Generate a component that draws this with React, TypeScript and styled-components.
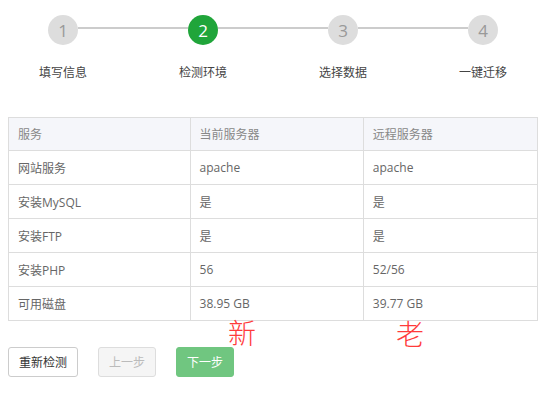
import React from 'react';
import styled, { createGlobalStyle } from 'styled-components';

const GlobalStyle = createGlobalStyle`
  body {
    margin: 0;
    background: #fff;
    font-family: "Open Sans", "Noto Sans CJK SC", sans-serif;
  }
`;

const Page = styled.div`
  position: relative;
  width: 550px;
  height: 397px;
  padding: 0 8px;
  box-sizing: border-box;
  overflow: hidden;
`;

const Steps = styled.ul`
  display: flex;
  list-style: none;
  margin: 15px 0 0 -15px;
  padding: 0;
`;

const Step = styled.li`
  position: relative;
  flex: 0 0 140px;
  display: flex;
  flex-direction: column;
  align-items: center;

  &:not(:first-child)::before {
    content: '';
    position: absolute;
    left: -55px;
    top: 12px;
    width: 110px;
    height: 2px;
    background: #ccc;
  }
`;

const Circle = styled.span<{ $active?: boolean }>`
  width: 30px;
  height: 30px;
  border-radius: 50%;
  display: flex;
  align-items: center;
  justify-content: center;
  font-size: 17px;
  background: ${p => (p.$active ? '#20a53a' : '#ddd')};
  color: ${p => (p.$active ? '#fff' : '#999')};
`;

const StepLabel = styled.span`
  margin-top: 19px;
  font-size: 12px;
  line-height: 18px;
  color: #444;
`;

const Table = styled.table`
  width: 530px;
  margin-top: 35px;
  border-collapse: collapse;
  font-size: 12px;
  color: #666;
`;

const Th = styled.th<{ $w: number }>`
  width: ${p => p.$w}px;
  height: 32px;
  padding: 0 9px;
  text-align: left;
  font-weight: normal;
  color: #888;
  background: #f5f6fa;
  border: 1px solid #ddd;
`;

const Td = styled.td`
  height: 33px;
  padding: 0 9px;
  border: 1px solid #ddd;
`;

const Actions = styled.div`
  display: flex;
  gap: 20px;
  margin-top: 26px;
`;

const Button = styled.button<{ $kind: 'default' | 'disabled' | 'primary' }>`
  height: 30px;
  padding: 0 10px;
  border-radius: 3px;
  font-family: inherit;
  font-size: 12px;
  cursor: pointer;
  border: 1px solid
    ${p => (p.$kind === 'primary' ? '#70c680' : p.$kind === 'disabled' ? '#ddd' : '#ccc')};
  background: ${p => (p.$kind === 'primary' ? '#70c680' : p.$kind === 'disabled' ? '#f5f5f5' : '#fff')};
  color: ${p => (p.$kind === 'primary' ? '#fff' : p.$kind === 'disabled' ? '#bbb' : '#333')};
`;

const Note = styled.span<{ $x: number; $y: number }>`
  position: absolute;
  left: ${p => p.$x}px;
  top: ${p => p.$y}px;
  font-size: 28px;
  line-height: 1;
  font-weight: 300;
  color: #ff3b3b;
  font-family: "Noto Sans CJK SC", serif;
`;

const steps = ['填写信息', '检测环境', '选择数据', '一键迁移'];

const rows = [
  ['网站服务', 'apache', 'apache'],
  ['安装MySQL', '是', '是'],
  ['安装FTP', '是', '是'],
  ['安装PHP', '56', '52/56'],
  ['可用磁盘', '38.95 GB', '39.77 GB'],
];

export default function App() {
  return (
    <Page>
      <GlobalStyle />
      <Steps>
        {steps.map((s, i) => (
          <Step key={s}>
            <Circle $active={i === 1}>{i + 1}</Circle>
            <StepLabel>{s}</StepLabel>
          </Step>
        ))}
      </Steps>
      <Table>
        <thead>
          <tr>
            <Th $w={183}>服务</Th>
            <Th $w={173}>当前服务器</Th>
            <Th $w={174}>远程服务器</Th>
          </tr>
        </thead>
        <tbody>
          {rows.map(r => (
            <tr key={r[0]}>
              {r.map((c, j) => (
                <Td key={j}>{c}</Td>
              ))}
            </tr>
          ))}
        </tbody>
      </Table>
      <Actions>
        <Button $kind="default">重新检测</Button>
        <Button $kind="disabled">上一步</Button>
        <Button $kind="primary">下一步</Button>
      </Actions>
      <Note $x={228} $y={318}>新</Note>
      <Note $x={396} $y={319}>老</Note>
    </Page>
  );
}
